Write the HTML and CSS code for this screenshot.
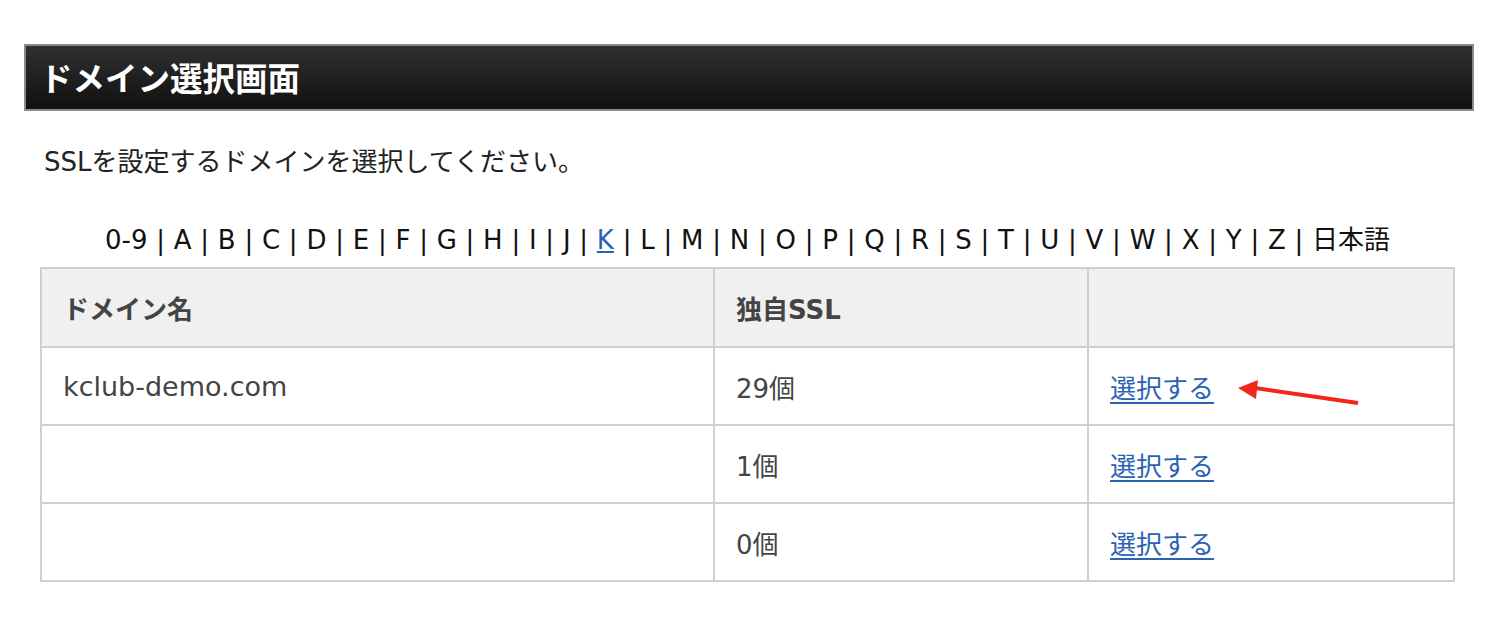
FILE: index.html
```html
<!DOCTYPE html>
<html lang="ja">
<head>
<meta charset="utf-8">
<link rel="stylesheet" href="styles.css">
</head>
<body>
<div class="page">
  <h1 class="title">ドメイン選択画面</h1>
  <p class="intro">SSLを設定するドメインを選択してください。</p>
  <div class="content">
    <p class="alpha">0-9 | A | B | C | D | E | F | G | H | I | J | <a href="#">K</a> | L | M | N | O | P | Q | R | S | T | U | V | W | X | Y | Z | 日本語</p>
    <table class="domains">
      <colgroup><col class="c1"><col class="c2"><col class="c3"></colgroup>
      <thead>
        <tr><th>ドメイン名</th><th>独自SSL</th><th></th></tr>
      </thead>
      <tbody>
        <tr><td class="name">kclub-demo.com</td><td>29個</td><td class="sel"><a href="#">選択する</a>
          <svg class="arrow" width="130" height="30" viewBox="0 0 130 30"><line x1="17" y1="8" x2="120" y2="23" stroke="#f2271c" stroke-width="4"/><polygon points="0,5 20,-3 18,16" fill="#f2271c" transform="translate(0,3)"/></svg></td></tr>
        <tr><td></td><td>1個</td><td><a href="#">選択する</a></td></tr>
        <tr><td></td><td>0個</td><td><a href="#">選択する</a></td></tr>
      </tbody>
    </table>
  </div>
</div>
</body>
</html>
```

FILE: styles.css
```css
html, body {
  margin: 0;
  padding: 0;
  background: #fff;
}
body {
  font-family: "DejaVu Sans", "Noto Sans CJK JP", sans-serif;
  color: #222;
}
.page {
  padding: 44px 26px 0 24px;
}
.title {
  margin: 0;
  height: 63px;
  box-sizing: content-box;
  border: 2px solid #8a8a8a;
  background: linear-gradient(#303030, #101010);
  color: #fff;
  font-family: "Noto Sans CJK JP", sans-serif;
  font-weight: 700;
  font-size: 32.5px;
  line-height: 62px;
  padding-left: 14px;
}
.intro {
  margin: 35px 0 0 20px;
  font-size: 26px;
  line-height: 32px;
}
.content {
  padding: 0 19px 0 16px;
}
.alpha {
  margin: 46px 0 0;
  text-align: center;
  font-size: 26px;
  line-height: 32px;
  word-spacing: 0.5px;
  color: #111;
}
.alpha a {
  color: #2a63b3;
  text-decoration: underline;
}
.domains {
  width: 100%;
  margin-top: 11px;
  border-collapse: collapse;
  border: 2px solid #cfcfcf;
  font-size: 26px;
  color: #444;
}
.c1 { width: 673px; }
.c2 { width: 374px; }
.domains th, .domains td {
  border: 2px solid #cfcfcf;
  height: 78px;
  padding: 0 0 0 21px;
  text-align: left;
  box-sizing: border-box;
}
.domains th {
  background: #f0f0f0;
  font-weight: 700;
  height: 79px;
}
.domains td a {
  color: #2a63b3;
  text-decoration: underline;
  text-underline-offset: 4px;
}
.domains td.name {
  font-size: 27px;
}
.sel {
  position: relative;
}
.arrow {
  position: absolute;
  left: 149px;
  top: 32px;
  overflow: visible;
}
```
